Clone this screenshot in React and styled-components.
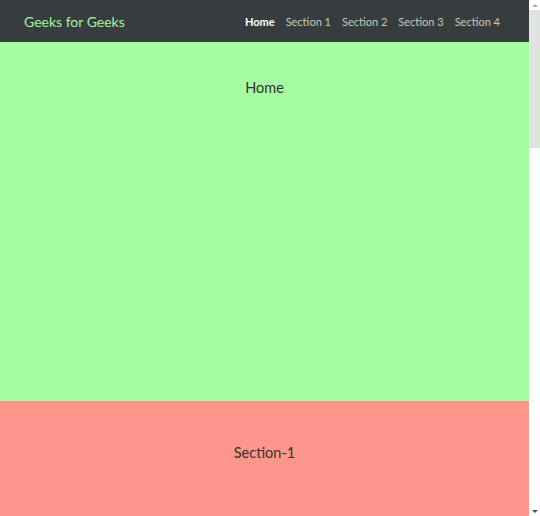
import React from "react";
import styled, { createGlobalStyle } from "styled-components";

const GlobalStyle = createGlobalStyle`
  html, body {
    margin: 0;
    padding: 0;
    overflow: hidden;
  }
  body {
    font-family: Lato, "Open Sans", sans-serif;
  }
`;

const Frame = styled.div`
  height: 100vh;
  display: flex;
`;

const Main = styled.div`
  flex: 1;
  overflow: hidden;
`;

const Scrollbar = styled.div`
  width: 11px;
  background: #ffffff;
  display: flex;
  flex-direction: column;
  align-items: center;
`;

const Arrow = styled.div`
  height: 10px;
  width: 100%;
  display: flex;
  align-items: center;
  justify-content: center;
  &::before {
    content: "";
    border-left: 3px solid transparent;
    border-right: 3px solid transparent;
    ${(p) =>
      p.$down
        ? "border-top: 3px solid #4a524a;"
        : "border-bottom: 3px solid #a9b2a9;"}
  }
`;

const Thumb = styled.div`
  width: 100%;
  height: 138px;
  background: #dfe4df;
`;

const Track = styled.div`
  flex: 1;
`;

const Navbar = styled.nav`
  height: 42px;
  background: #373d3f;
  display: flex;
  align-items: center;
  justify-content: space-between;
  padding: 0 29px 0 24px;
`;

const Brand = styled.a`
  color: #a6f2a2;
  font-size: 14px;
  text-decoration: none;
`;

const Links = styled.div`
  display: flex;
  gap: 11px;
`;

const NavLink = styled.a`
  font-size: 11px;
  text-decoration: none;
  color: ${(p) => (p.$active ? "#ffffff" : "#c6c9b8")};
  font-weight: ${(p) => (p.$active ? 700 : 400)};
`;

const Section = styled.section`
  height: ${(p) => p.$h}px;
  background: ${(p) => p.$bg};
  display: flex;
  justify-content: center;
  padding-top: ${(p) => p.$top}px;
  box-sizing: border-box;
`;

const Title = styled.h2`
  margin: 0;
  font-size: 14.5px;
  font-weight: 400;
  color: #2f3230;
`;

const sections = [
  { title: "Home", bg: "#a6fca1", top: 37, h: 359 },
  { title: "Section-1", bg: "#fe968b", top: 43, h: 115 },
];

export default function App() {
  return (
    <>
      <GlobalStyle />
      <Frame>
        <Main>
          <Navbar>
            <Brand href="#">Geeks for Geeks</Brand>
            <Links>
              <NavLink href="#" $active>Home</NavLink>
              <NavLink href="#">Section 1</NavLink>
              <NavLink href="#">Section 2</NavLink>
              <NavLink href="#">Section 3</NavLink>
              <NavLink href="#">Section 4</NavLink>
            </Links>
          </Navbar>
          {sections.map((s) => (
            <Section key={s.title} $bg={s.bg} $top={s.top} $h={s.h}>
              <Title>{s.title}</Title>
            </Section>
          ))}
        </Main>
        <Scrollbar>
          <Arrow />
          <Thumb />
          <Track />
          <Arrow $down />
        </Scrollbar>
      </Frame>
    </>
  );
}
